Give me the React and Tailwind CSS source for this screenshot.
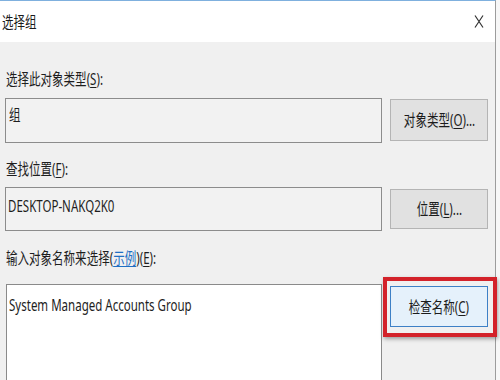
const font = "font-['Noto_Sans','Noto_Sans_CJK_SC',sans-serif]";

// the screenshot is squeezed sideways, so text is narrowed to match
const Txt = ({ children, center }) => (
  <span
    className={`inline-block whitespace-nowrap scale-x-[0.72] ${
      center ? "origin-center" : "origin-left"
    }`}
  >
    {children}
  </span>
);

const Key = ({ k }) => (
  <>
    (<span className="underline underline-offset-2">{k}</span>)
  </>
);

const Btn = ({ children, active, className = "" }) => (
  <div
    className={`w-[98px] shrink-0 flex items-center justify-center text-[16px] text-[#1c1c1c] border ${
      active
        ? "bg-[#e5f1fb] border-[#3d80c6]"
        : "bg-[#e1e1e1] border-[#b4b4b4]"
    } ${className}`}
  >
    <Txt center>{children}</Txt>
  </div>
);

export default function App() {
  return (
    <div className={`w-[500px] h-[380px] overflow-hidden bg-[#f7f7f7] ${font}`}>
      <div className="w-[496px] h-[380px] border-t border-t-[#7fb0de] border-r border-r-[#9c9c9c] flex flex-col">
        {/* title bar */}
        <div className="h-[41px] shrink-0 bg-white flex items-center justify-between pl-[2px] pr-[10px] text-[16px] text-[#1a1a1a]">
          <Txt>选择组</Txt>
          <svg width="10" height="13" viewBox="0 0 10 13" className="mr-[1px]">
            <path d="M1 0.5 L9 12.5 M9 0.5 L1 12.5" stroke="#333" strokeWidth="1.2" fill="none" />
          </svg>
        </div>

        {/* body */}
        <div className="flex-1 shrink-0 bg-[#f0f0f0] pl-[5px] text-[16px] text-[#1e1e1e]">
          <div className="mt-[27px] h-[20px] leading-[20px] pl-[1px]">
            <Txt>
              选择此对象类型<Key k="S" />:
            </Txt>
          </div>

          <div className="mt-[9px] flex gap-[8px]">
            <div className="w-[377px] h-[45px] border border-[#8c8c8c] bg-[#f2f2f2] pl-[3px] pt-[6px] leading-[20px]">
              <Txt>组</Txt>
            </div>
            <Btn className="mt-[1px] h-[42px]">
              对象类型<Key k="O" />...
            </Btn>
          </div>

          <div className="mt-[16px] h-[20px] leading-[20px] pl-[1px]">
            <Txt>
              查找位置<Key k="F" />:
            </Txt>
          </div>

          <div className="mt-[8px] flex gap-[8px]">
            <div className="w-[377px] h-[44px] border border-[#8c8c8c] bg-[#f2f2f2] pl-[2px] pt-[8px] leading-[20px]">
              <Txt>DESKTOP-NAKQ2K0</Txt>
            </div>
            <Btn className="mt-[2px] h-[40px]">
              位置<Key k="L" />...
            </Btn>
          </div>

          <div className="mt-[17px] h-[20px] leading-[20px] pl-[1px]">
            <Txt>
              输入对象名称来选择(
              <span className="text-[#1f6fc4] underline underline-offset-2">示例</span>)
              <Key k="E" />:
            </Txt>
          </div>

          <div className="mt-[16px] flex gap-[8px]">
            <div className="w-[376px] h-[120px] ml-[1px] border border-[#8a8a8a] bg-white pl-[2px] pt-[10px] leading-[20px]">
              <Txt>System Managed Accounts Group</Txt>
            </div>
            <div className="relative mt-[2px] h-[41px]">
              <Btn active className="h-[41px]">
                检查名称<Key k="C" />
              </Btn>
              <div className="absolute -left-[7px] -right-[9px] -top-[9px] -bottom-[10px] border-[4px] border-[#d3222a] shadow-[1px_2px_4px_rgba(0,0,0,0.35)]" />
            </div>
          </div>
        </div>
      </div>
    </div>
  );
}
